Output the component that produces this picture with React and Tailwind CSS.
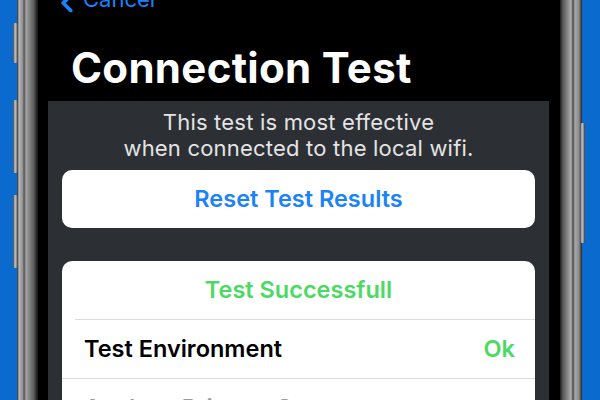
import { ChevronLeft } from 'lucide-react';

const SideButton = ({ className }) => (
  <div
    className={`absolute w-[5px] rounded-[2px] bg-[linear-gradient(90deg,#3a3a3a,#c8c8c8_40%,#7a7a7a_80%,#2a2a2a)] ${className}`}
  />
);

const ResultRow = ({ label, value, muted, inset }) => (
  <div className="relative flex h-[59px] items-center justify-between pl-[22px] pr-[20px]">
    <div className={`absolute top-0 right-0 h-px bg-[#dcdcdc] ${inset ? 'left-[13px]' : 'left-0'}`} />
    <span className={`text-[23.5px] font-semibold ${muted ? 'text-[#9a9a9a]' : 'text-black'}`}>{label}</span>
    {value && <span className="text-[23.5px] font-semibold text-[#4cd964]">{value}</span>}
  </div>
);

export default function App() {
  return (
    <div className="relative flex h-[400px] w-[600px] overflow-hidden bg-[#0a6acd] font-['Inter','Liberation_Sans',sans-serif]">
      <div className="w-[17px] shrink-0" />

      {/* left frame */}
      <div className="relative w-[21px] shrink-0 bg-[linear-gradient(90deg,#222_0px,#b8b8b8_2px,#8c8c8c_6px,#4c4c4c_7px,#a4a4a4_9px,#7c7c7c_13px,#5a5a5a_17px,#1c1c1c_20px)]">
        <SideButton className="-left-[4px] top-[23px] h-[40px]" />
        <SideButton className="-left-[4px] top-[100px] h-[73px]" />
        <SideButton className="-left-[4px] top-[195px] h-[73px]" />
      </div>

      {/* screen */}
      <div className="flex w-[522px] shrink-0 flex-col bg-black pl-[10px] pr-[11px]">
        <div className="-mt-[16px] flex h-[30px] items-center gap-[1px] pl-[12px] text-[#1a82fb]">
          <ChevronLeft size={30} strokeWidth={3} className="-ml-[8px] mt-[8px]" />
          <span className="text-[22px] leading-[30px]">Cancel</span>
        </div>

        <h1 className="mt-[29px] pl-[23px] text-[42px] font-bold leading-[50px] tracking-[0.3px] text-white">
          Connection Test
        </h1>

        <div className="mt-[8px] flex flex-1 flex-col bg-[#2c3034] px-[14px] pt-[8px]">
          <p className="text-center text-[22px] leading-[26px] tracking-[0.2px] text-[#e4e4e4]">
            This test is most effective
            <br />
            when connected to the local wifi.
          </p>

          <button className="mt-[9px] flex h-[58px] items-center justify-center rounded-[10px] bg-white text-[23.5px] font-semibold text-[#1a82fb]">
            Reset Test Results
          </button>

          <div className="mt-[33px] overflow-hidden rounded-t-[10px] bg-white">
            <div className="flex h-[58px] items-center justify-center text-[23.5px] font-semibold text-[#4cd964]">
              Test Successfull
            </div>
            <ResultRow label="Test Environment" value="Ok" inset />
            <ResultRow label="Analyze Primary Server" muted />
          </div>
        </div>
      </div>

      {/* right frame */}
      <div className="relative w-[22px] shrink-0 bg-[linear-gradient(90deg,#1c1c1c_0px,#5a5a5a_3px,#8a8a8a_8px,#b0b0b0_11px,#4c4c4c_13px,#a8a8a8_15px,#8a8a8a_19px,#222_22px)]">
        <SideButton className="-right-[3px] top-[123px] h-[120px]" />
      </div>
    </div>
  );
}
